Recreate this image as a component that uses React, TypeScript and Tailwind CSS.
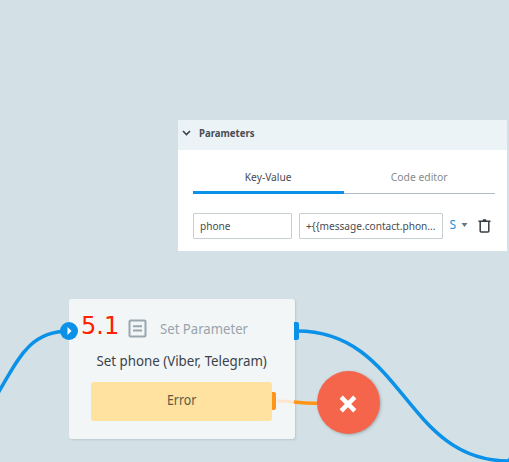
import type { ReactNode } from 'react';

function Label({ children, className = '' }: { children: ReactNode; className?: string }) {
  return <span className={`inline-block shrink-0 whitespace-nowrap ${className}`}>{children}</span>;
}

function Connections() {
  return (
    <svg className="absolute inset-0" width="509" height="462" fill="none">
      <path d="M-5 398 C16 365 26 331 69 331" stroke="#0b91e8" strokeWidth="3.5" />
      <path d="M297 331 C404 331 404 461 509 461" stroke="#0b91e8" strokeWidth="3.5" />
      <circle cx="516" cy="463" r="9" fill="#0b91e8" />
    </svg>
  );
}

function ParametersPanel() {
  return (
    <section className="absolute left-[178px] top-[120px] flex h-[130.5px] w-[329px] flex-col bg-white text-[11px] leading-4 text-[#484d53]">
      <header className="flex h-[29.5px] items-center bg-[#ebf3f7] pl-[4px] pb-[4px]">
        <svg width="9" height="6" viewBox="0 0 9 6" fill="none" className="mr-[8px]">
          <path d="M1 1 L4.5 4.5 L8 1" stroke="#39434b" strokeWidth="1.6" />
        </svg>
        <Label className="origin-left scale-x-[0.87] font-bold">Parameters</Label>
      </header>
      <nav className="ml-[15px] mt-[16px] flex h-[28px] w-[302px]">
        <div className="flex h-[28px] w-[151px] justify-center border-b-[3px] border-[#0b91e8] pt-[3px]">
          <Label className="scale-x-[0.93]">Key-Value</Label>
        </div>
        <div className="flex h-[28px] w-[151px] justify-center border-b-[1px] border-[#b1bcc4] pt-[3px] text-[#858d8e]">
          <Label className="scale-x-[0.94]">Code editor</Label>
        </div>
      </nav>
      <div className="mt-[19px] flex items-center pl-[15px]">
        <div className="flex h-[26px] w-[99px] items-center rounded-[1px] border border-[#c8cfd3] pl-[6px]">
          <Label className="origin-left scale-x-[0.92]">phone</Label>
        </div>
        <div className="ml-[7px] flex h-[26px] w-[144px] items-center rounded-[1px] border border-[#c8cfd3] pl-[6px]">
          <Label className="origin-left scale-x-[0.92]">+&#123;&#123;message.contact.phon...</Label>
        </div>
        <Label className="-mt-[2px] ml-[6.5px] w-[6px] text-[12px] text-[#2590dd]">S</Label>
        <svg width="7" height="4" className="ml-[5px] -mt-[2px]">
          <path d="M0.5 0 H6.5 L3.5 4 Z" fill="#667985" />
        </svg>
        <svg width="13" height="14" viewBox="0 0 13 14" fill="none" className="ml-[10px]">
          <path d="M0.5 2.2 H12.5 M4.8 1 H8.2 M2.2 3 V11.9 Q2.2 12.9 3.2 12.9 H9.8 Q10.8 12.9 10.8 11.9 V3" stroke="#353d43" strokeWidth="1.5" />
        </svg>
      </div>
    </section>
  );
}

function ParameterNode() {
  return (
    <section className="absolute left-[69px] top-[299px] h-[140px] w-[226px] rounded-[3px] bg-[#f2f6f7] shadow-[1px_1px_2px_#b9c8ce]">
      <div className="flex h-[52px] items-center pl-[12px]">
        <Label className="mt-[2px] w-[38px] font-['DejaVu_Sans',sans-serif] text-[24px] leading-6 text-[#ff2100]">5.1</Label>
        <svg width="19" height="19" viewBox="0 0 19 19" fill="none" stroke="#98a6b0" strokeWidth="2" className="ml-[9px] mt-[7px]">
          <rect x="1.5" y="1.5" width="16" height="16" rx="1" />
          <path d="M5 7.3 H14 M5 11.5 H14" />
        </svg>
        <Label className="ml-[13px] mt-[8px] origin-left scale-x-[0.94] text-[14px] leading-5 text-[#98a4ac]">Set Parameter</Label>
      </div>
      <div className="flex h-[31px] justify-center">
        <Label className="scale-x-[0.95] text-[14px] leading-5 text-[#3c434b]">Set phone (Viber, Telegram)</Label>
      </div>
      <div className="ml-[22px] flex h-[39px] w-[181px] items-center justify-center rounded-[3px] bg-[#ffe29f]">
        <Label className="-mt-[3px] scale-x-[0.88] text-[14px] leading-5 text-[#5d5a46]">Error</Label>
      </div>
      <div className="absolute -left-[9px] top-[23px] flex size-[18px] items-center justify-center rounded-full bg-[#0b91e8]">
        <svg width="6" height="8"><path d="M1.5 0 L5.5 4 L1.5 8 Z" fill="white" /></svg>
      </div>
      <div className="absolute left-[225px] top-[23px] h-[18px] w-[5px] rounded-r-[2px] bg-[#0b91e8]" />
      <div className="absolute left-[203px] top-[93px] h-[18px] w-[4px] rounded-r-[2px] bg-[#ff9518]" />
    </section>
  );
}

function ErrorNode() {
  return (
    <>
      <svg className="absolute left-[276px] top-[396px]" width="44" height="12" fill="none">
        <path d="M1 5 Q10 5 19 6" stroke="#ffe5cd" strokeWidth="3" />
        <path d="M18 6 Q28 7.3 44 7.3" stroke="#ff9518" strokeWidth="3.5" />
      </svg>
      <div className="absolute left-[317px] top-[371px] flex size-[63px] items-center justify-center rounded-full bg-[#f5654c] shadow-[1px_1px_3px_#9eabb0]">
        <svg width="18" height="18" viewBox="0 0 18 18" className="mr-[1px] mt-[2px]">
          <path d="M2.2 2.2 L15.8 15.8 M15.8 2.2 L2.2 15.8" stroke="white" strokeWidth="4.5" />
        </svg>
      </div>
    </>
  );
}

export default function App() {
  return (
    <main className="relative h-[462px] w-[509px] overflow-hidden bg-[#d3e0e6] font-['Noto_Sans',sans-serif]">
      <Connections />
      <ParametersPanel />
      <ParameterNode />
      <ErrorNode />
    </main>
  );
}
